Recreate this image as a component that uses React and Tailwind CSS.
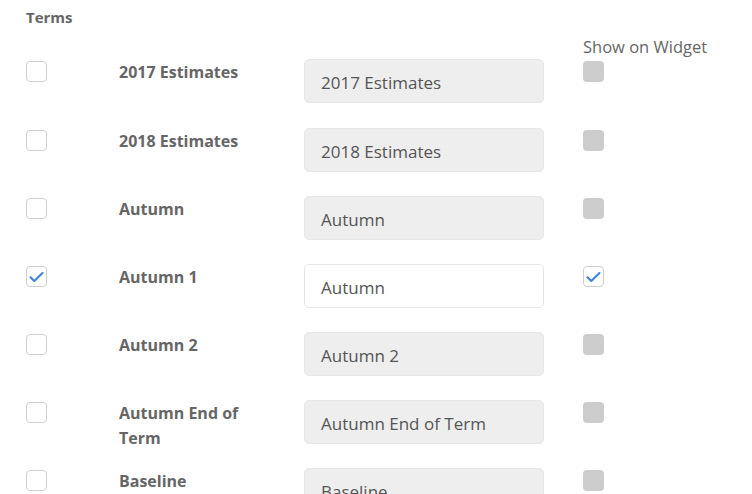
const terms = [
  { label: 'Terms2017', name: '2017 Estimates', value: '2017 Estimates', on: false },
  { label: 'Terms2018', name: '2018 Estimates', value: '2018 Estimates', on: false },
  { label: 'Autumn', name: 'Autumn', value: 'Autumn', on: false },
  { label: 'Autumn1', name: 'Autumn 1', value: 'Autumn', on: true },
  { label: 'Autumn2', name: 'Autumn 2', value: 'Autumn 2', on: false },
  { label: 'AutumnEnd', name: 'Autumn End of Term', value: 'Autumn End of Term', on: false },
  { label: 'Baseline', name: 'Baseline', value: 'Baseline', on: false },
];

function Check({ checked, disabled }) {
  if (checked) {
    return (
      <div className="w-[21px] h-[21px] rounded-[4px] border border-[#cfcfcf] bg-white flex items-center justify-center">
        <svg width="15" height="12" viewBox="0 0 15 12" fill="none">
          <path d="M1.5 6.2 L5.3 10 L13.5 2" stroke="#3a86d6" strokeWidth="2.1" strokeLinecap="round" strokeLinejoin="round" />
        </svg>
      </div>
    );
  }
  if (disabled) {
    return <div className="w-[21px] h-[21px] rounded-[4px] bg-[#cccccc]" />;
  }
  return <div className="w-[21px] h-[21px] rounded-[4px] border border-[#cfcfcf] bg-white" />;
}

export default function App() {
  return (
    <div className="w-[752px] h-[494px] overflow-hidden bg-white text-[#666] font-['Open_Sans',sans-serif]">
      <div className="pl-[26px] pt-[7px]">
        <div className="text-[15px] font-bold leading-[20px]">Terms</div>
        <div className="h-[33px] flex items-end">
          <div className="ml-[557px] text-[16.5px] leading-[20px] mb-[3px]">Show on Widget</div>
        </div>
        <div className="flex flex-col gap-[24px]">
          {terms.map((t, i) => (
            <div key={t.label} className={`flex items-start h-[44px] ${i === 1 ? 'mt-[1px]' : ''}`}>
              <div className="w-[93px] pt-[1px]">
                <Check checked={t.on} />
              </div>
              <div className="w-[185px] pr-[30px] text-[16px] font-bold leading-[25px]">
                {t.name}
              </div>
              <div
                className={`w-[240px] h-[44px] mt-[-1px] rounded-[5px] border border-[#e6e6e6] px-[16px] pt-[4px] flex items-center text-[17px] text-[#555] ${
                  t.on ? 'bg-white' : 'bg-[#eeeeee]'
                }`}
              >
                {t.value}
              </div>
              <div className="ml-[39px] pt-[1px]">
                <Check checked={t.on} disabled />
              </div>
            </div>
          ))}
        </div>
      </div>
    </div>
  );
}
